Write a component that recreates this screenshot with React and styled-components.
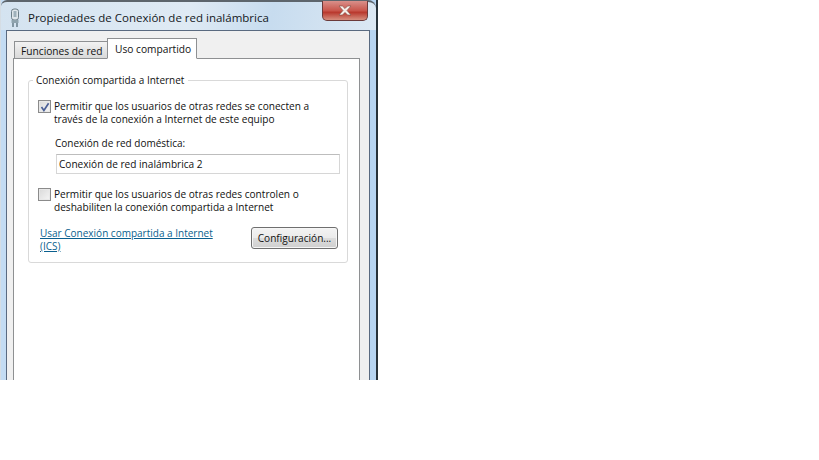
import React from "react";
import styled, { createGlobalStyle } from "styled-components";

const Global = createGlobalStyle`
  html, body { margin: 0; padding: 0; background: #fff; }
  body { font-family: "Open Sans", "Liberation Sans", sans-serif; }
`;
const Frame = styled.div`
  box-sizing: border-box; width: 378px; height: 380px; overflow: hidden;
  position: relative; display: flex; flex-direction: column;
  background: linear-gradient(90deg, #c4dcf3 0, #b7d5f2 100%);
  border-right: 2px solid #27323a; border-left: 1px solid #d5dde4;
  padding: 0 6px 0 5px; margin-top: 0;
`;
const TitleBar = styled.header`
  flex: none; height: 30px; margin: 0 -6px 0 -5px; padding-left: 8px;
  display: flex; align-items: center; gap: 7px; box-sizing: border-box;
  padding-top: 3px;
  border-top: 2px solid #5d656c;
  border-top-left-radius: 6px; border-top-right-radius: 8px;
  background: linear-gradient(100deg, #d4e3f0 0%, #dfeaf4 50%, #c7dcef 72%, #dce8f3 100%);
`;
const Title = styled.h1`
  margin: 0; font-size: 11.5px; font-weight: 400; color: #14181c; white-space: nowrap;
`;
const CloseButton = styled.button`
  position: absolute; left: 321px; top: 1px; width: 46px; height: 20px; padding: 0;
  display: flex; align-items: center; justify-content: center;
  border: 1px solid #6b3a3a; border-top: 0; border-radius: 0 0 5px 5px;
  background: linear-gradient(180deg, #d9908a 0%, #c9564c 50%, #b9392e 60%, #d68f7f 100%);
`;
const Client = styled.main`
  flex: 1; display: flex; flex-direction: column; box-sizing: border-box;
  background: #f0f0f0; border: 1px solid #5a6a80; border-bottom: 0;
  padding: 7px 9px 0 6px; min-height: 0;
`;
const TabList = styled.nav`
  flex: none; display: flex; align-items: flex-end; height: 21px; position: relative; z-index: 1;
  margin-bottom: -1px; padding-left: 1px;
`;
const Tab = styled.div`
  box-sizing: border-box; font-size: 10.2px; color: #111; white-space: nowrap;
  border: 1px solid #8e9092;
  ${p => p.$active ? `
    height: 21px; width: 90px; background: #fff; border-bottom-color: #fff; padding: 3px 0 0 7px;
  ` : `
    height: 18px; width: 93px; border-right: 0;
    background: linear-gradient(180deg, #f2f2f2, #d9d9d9); padding: 2px 0 0 6px;
  `}
`;
const Panel = styled.section`
  flex: 1; background: #fff; border: 1px solid #8e9092; border-bottom: 0;
  padding: 14px 11px 0 14px; min-height: 0;
`;
const Group = styled.fieldset`
  box-sizing: border-box; margin: 0; height: 190px; padding: 0 6px 0 9px;
  border: 1px solid #d9d9d9; border-radius: 3px; min-width: 0;
`;
const Legend = styled.legend`
  font-size: 10px; color: #111; padding: 0 4px 0 3px; margin-left: -5px; line-height: 14px;
`;
const OptionRow = styled.label`
  display: flex; gap: 3px; font-size: 10.1px; line-height: 13px; color: #111;
  margin-top: ${p => p.$top}px;
`;
const OptionText = styled.span`
  max-width: 262px;
`;
const Check = styled.span`
  flex: none; box-sizing: border-box; width: 13px; height: 13px; margin-top: 0;
  border: 1px solid #8b8b8b; display: flex; align-items: center; justify-content: center;
  background: linear-gradient(135deg, #d9d9d9, #f5f5f5);
  box-shadow: inset 0 0 0 1px #e8e8e8;
`;
const Indented = styled.div`
  margin: 11px 0 0 18px; display: flex; flex-direction: column; gap: 4px;
`;
const FieldLabel = styled.div`
  font-size: 10px; line-height: 13px; color: #111; margin-left: -1px;
`;
const TextField = styled.div`
  box-sizing: border-box; height: 20px; width: 284px; font-size: 10.1px; line-height: 18px;
  padding-left: 2px; color: #111; border: 1px solid #d6d6d6; border-top-color: #bdbdbd;
`;
const Footer = styled.div`
  display: flex; justify-content: space-between; align-items: flex-start;
  margin-top: 13px; padding: 0 3px 0 2px;
`;
const LinkText = styled.a`
  width: 190px; font-size: 10px; line-height: 13px; margin-top: 0; color: #0a5f8e; text-decoration: underline;
`;
const ActionButton = styled.button`
  box-sizing: border-box; width: 87px; height: 22px; padding: 0; font: inherit; font-size: 10.1px;
  color: #111; border: 1px solid #6f6f6f; border-radius: 3px;
  background: linear-gradient(180deg, #f3f3f3 0%, #ebebeb 48%, #dcdcdc 52%, #cfcfcf 100%);
  box-shadow: inset 0 0 0 1px #f6f6f6;
`;

const PlugIcon = () => (
  <svg width="12" height="20" viewBox="0 0 12 20" fill="none">
    <rect x="2.5" y="1" width="7" height="11" rx="2.5" fill="#dfe6ea" stroke="#6d7f88" />
    <rect x="4.5" y="3" width="3" height="6" fill="#9fb1ba" />
    <rect x="2.5" y="12" width="7" height="3" fill="#8fa3ad" />
    <path d="M4 15v4M8 15v4" stroke="#4d6470" strokeWidth="1.2" />
  </svg>
);
const CloseGlyph = () => (
  <svg width="14" height="11" viewBox="0 0 14 11">
    <path d="M1 1h3.4L7 3.6 9.6 1H13L9 5.5 13 10H9.6L7 7.4 4.4 10H1l4-4.5z" fill="#f6efe9" stroke="#7a4a42" strokeWidth=".6" />
  </svg>
);
const Tick = () => (
  <svg width="10" height="10" viewBox="0 0 10 10" fill="none">
    <path d="M1.5 5l2.4 3.4L8.6 1.2" stroke="#4a5f96" strokeWidth="1.7" />
  </svg>
);

export default function App() {
  return (
    <>
      <Global />
      <Frame>
        <TitleBar>
          <PlugIcon />
          <Title>Propiedades de Conexión de red inalámbrica</Title>
        </TitleBar>
        <CloseButton aria-label="Cerrar"><CloseGlyph /></CloseButton>
        <Client>
          <TabList>
            <Tab>Funciones de red</Tab>
            <Tab $active>Uso compartido</Tab>
          </TabList>
          <Panel>
            <Group>
              <Legend>Conexión compartida a Internet</Legend>
              <OptionRow $top={13}>
                <Check><Tick /></Check>
                <OptionText>Permitir que los usuarios de otras redes se conecten a través de la conexión a Internet de este equipo</OptionText>
              </OptionRow>
              <Indented>
                <FieldLabel>Conexión de red doméstica:</FieldLabel>
                <TextField>Conexión de red inalámbrica 2</TextField>
              </Indented>
              <OptionRow $top={14}>
                <Check />
                <OptionText>Permitir que los usuarios de otras redes controlen o deshabiliten la conexión compartida a Internet</OptionText>
              </OptionRow>
              <Footer>
                <LinkText>Usar Conexión compartida a Internet (ICS)</LinkText>
                <ActionButton>Configuración...</ActionButton>
              </Footer>
            </Group>
          </Panel>
        </Client>
      </Frame>
    </>
  );
}
